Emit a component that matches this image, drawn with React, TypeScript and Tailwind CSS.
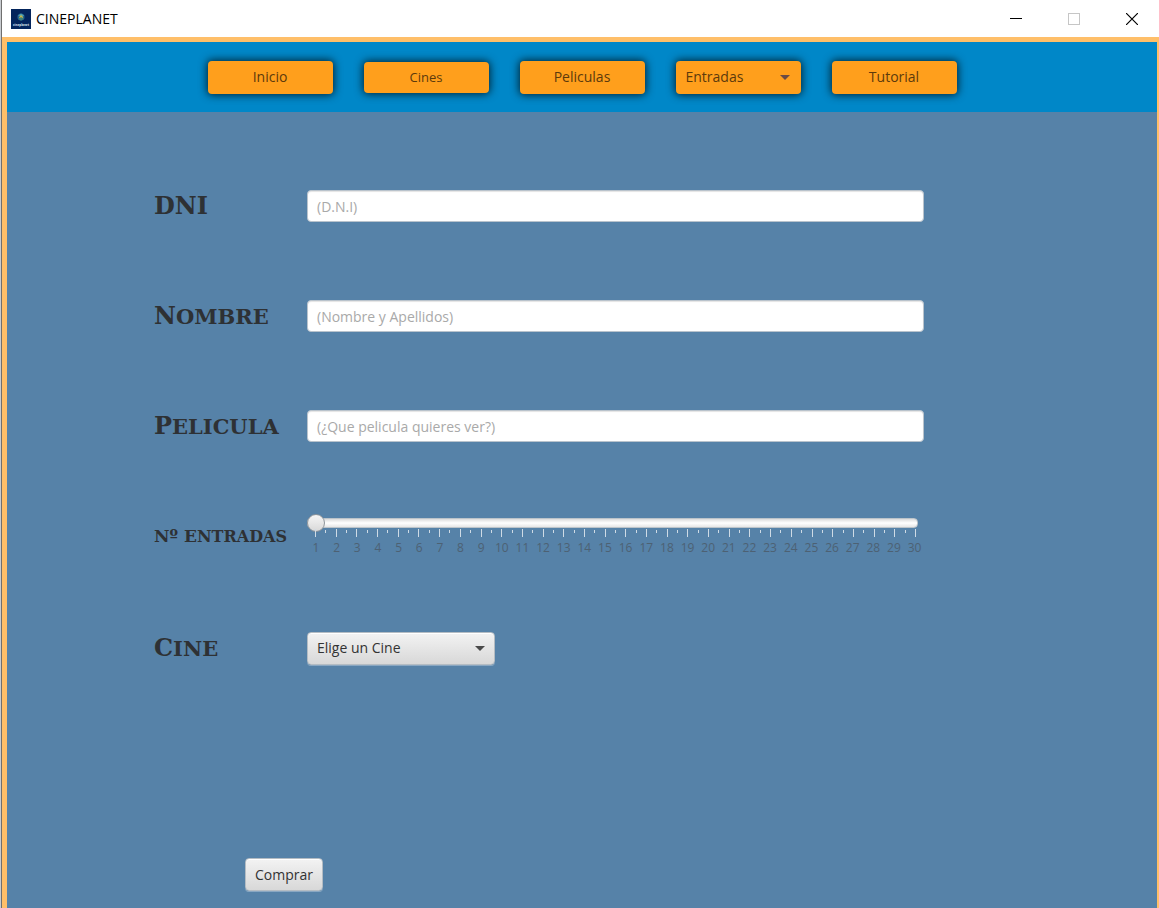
import { useId } from 'react';
import type { ReactNode } from 'react';

const NAV_BUTTON =
  "w-[125px] rounded bg-[#ff9f1c] text-sm text-[#5c3a0c] shadow-[0_0_9px_1px_rgba(0,0,0,0.75)]";

const FIELD_LABEL =
  "w-[153px] shrink-0 whitespace-nowrap font-['DejaVu_Serif',serif] font-bold text-[#2e3134]";

const GREY_CONTROL =
  'rounded border border-[#b4bcc3] bg-linear-to-b from-[#f3f3f3] to-[#d8d8d8] text-sm text-[#333333] shadow-[inset_0_1px_0_#ffffff,0_1px_0_rgba(255,255,255,0.3)]';

const TICKETS = Array.from({ length: 30 }, (_, i) => i + 1);
const TICKS = Array.from({ length: 59 }, (_, i) => i);

function AppLogo() {
  return (
    <svg viewBox="0 0 20 20" className="size-5" aria-hidden="true">
      <rect width="20" height="20" fill="#03245c" />
      <circle cx="10" cy="8" r="3.6" fill="#23638c" />
      <path d="M7 6.5 10 4.4l3 2-1.4 1.3z" fill="#4f9fb0" />
      <path d="M8 8.2 10 6l2.2 2.2L10 10.8z" fill="#c9b84a" />
      <path d="M10 8v3.8L7.4 10zM10 8v3.8l2.8-2z" fill="#3c7f78" />
      <text x="10" y="16.6" textAnchor="middle" fontSize="3" fontWeight="700" fontFamily="Open Sans, sans-serif" fill="#dfe6f0">
        cineplanet
      </text>
    </svg>
  );
}

function Arrow({ className }: { className: string }) {
  return (
    <svg viewBox="0 0 10 5" className={`pointer-events-none absolute h-[5px] w-[10px] ${className}`} aria-hidden="true">
      <path d="M0 0h10L5 5z" fill="currentColor" />
    </svg>
  );
}

function TitleBar() {
  const control = 'flex h-9 w-12 items-center justify-center';
  return (
    <header className="flex h-[37px] items-center bg-white pr-[3px] pl-[9px]">
      <AppLogo />
      <h1 className="ml-[5px] flex-1 text-sm text-black">CINEPLANET</h1>
      <div className="flex gap-[10px]">
        <button type="button" aria-label="Minimizar" className={control}>
          <svg viewBox="0 0 12 12" className="size-3" shapeRendering="crispEdges">
            <path d="M0 5.5h12" stroke="#000" />
          </svg>
        </button>
        <button type="button" aria-label="Maximizar" disabled className={control}>
          <svg viewBox="0 0 12 12" className="size-3" shapeRendering="crispEdges">
            <rect x=".5" y=".5" width="11" height="11" fill="none" stroke="#c6c6c6" />
          </svg>
        </button>
        <button type="button" aria-label="Cerrar" className={control}>
          <svg viewBox="0 0 12 12" className="size-3">
            <path d="M0 0l12 12M12 0 0 12" stroke="#000" strokeWidth="1.2" />
          </svg>
        </button>
      </div>
    </header>
  );
}

function NavBar() {
  return (
    <nav className="flex h-[70px] items-center justify-center gap-[31px] bg-[#0087c8]">
      <button type="button" className={`${NAV_BUTTON} h-[33px]`}>Inicio</button>
      <button type="button" className={`${NAV_BUTTON} h-[31px] text-[13px]`}>Cines</button>
      <button type="button" className={`${NAV_BUTTON} h-[33px]`}>Peliculas</button>
      <div className="relative flex items-center">
        <select aria-label="Entradas" className={`${NAV_BUTTON} h-[33px] appearance-none pl-[10px]`}>
          <option>Entradas</option>
        </select>
        <Arrow className="right-[11px] text-[#6b4b45]" />
      </div>
      <button type="button" className={`${NAV_BUTTON} h-[33px]`}>Tutorial</button>
    </nav>
  );
}

/* Capitals keep the label size; lower-case runs become slightly smaller capitals. */
function EngravedText({ text, small }: { text: string; small?: boolean }) {
  return text
    .split(/([a-z]+)/)
    .filter(Boolean)
    .map((part, i) =>
      /^[a-z]/.test(part) ? (
        <span key={i} className={`uppercase ${small ? 'text-[16px]' : 'text-[21px]'}`}>{part}</span>
      ) : (
        <span key={i}>{part}</span>
      ),
    );
}

function Row({ id, label, small, children }: { id: string; label: string; small?: boolean; children: ReactNode }) {
  return (
    <div className="flex min-h-[44px] items-center">
      <label htmlFor={id} className={`${FIELD_LABEL} ${small ? 'text-[17px]' : 'text-[24px]'}`}>
        <EngravedText text={label} small={small} />
      </label>
      <div className="min-w-0 flex-1">{children}</div>
    </div>
  );
}

function TextRow({ label, placeholder }: { label: string; placeholder: string }) {
  const id = useId();
  return (
    <Row id={id} label={label}>
      <input
        id={id}
        type="text"
        placeholder={placeholder}
        className="block h-8 w-full rounded border border-[#b9c3cc] bg-white px-[9px] text-sm text-[#333333] shadow-[inset_0_1px_1px_#e4e4e4] placeholder:text-[#a9a9a9]"
      />
    </Row>
  );
}

function TicketSlider() {
  const id = useId();
  return (
    <Row id={id} label="Nº Entradas" small>
      <div className="h-[46px]">
        <div className="grid h-[18px] items-center">
          <div className="col-start-1 row-start-1 mr-[6px] h-[10px] rounded border border-[#bcc4ca] bg-linear-to-b from-[#dcdcdc] via-white to-[#e6e6e6]" />
          <input
            id={id}
            type="range"
            min={1}
            max={30}
            defaultValue={1}
            className="col-start-1 row-start-1 m-0 h-[18px] w-full appearance-none bg-transparent [&::-webkit-slider-thumb]:size-[18px] [&::-webkit-slider-thumb]:appearance-none [&::-webkit-slider-thumb]:rounded-full [&::-webkit-slider-thumb]:border [&::-webkit-slider-thumb]:border-[#8e959b] [&::-webkit-slider-thumb]:bg-linear-to-b [&::-webkit-slider-thumb]:from-[#f6f6f6] [&::-webkit-slider-thumb]:to-[#d9d9d9]"
          />
        </div>
        <div className="-mt-[3px] mb-[3px] flex h-2 justify-between px-2" aria-hidden="true">
          {TICKS.map((t) => (
            <span key={t} className={t % 2 === 0 ? 'h-2 w-px bg-[#cfdbe5]' : 'mt-px h-[3px] w-px bg-[#cfdbe5]'} />
          ))}
        </div>
        <div className="flex justify-between px-[9px] text-xs leading-4 text-[#4d6173]" aria-hidden="true">
          {TICKETS.map((n) => (
            <span key={n} className="flex w-0 justify-center">{n}</span>
          ))}
        </div>
      </div>
    </Row>
  );
}

function CinemaRow() {
  const id = useId();
  return (
    <Row id={id} label="Cine">
      <div className="relative flex w-[188px] items-center">
        <select id={id} className={`${GREY_CONTROL} h-[33px] w-full appearance-none pr-7 pl-[9px]`}>
          <option>Elige un Cine</option>
        </select>
        <Arrow className="right-[10px] text-[#4a4a4a]" />
      </div>
    </Row>
  );
}

export default function App() {
  return (
    <div className="flex min-h-screen font-['Open_Sans','Noto_Sans',sans-serif]">
      <div className="w-[2px] shrink-0 border-r border-[#6f6f6f] bg-[#c9ccd0]" />
      <div className="flex min-w-0 flex-1 flex-col">
        <TitleBar />
        <div className="flex flex-1 flex-col border-t-[5px] border-r-2 border-l-[5px] border-[#ffbf69] bg-[#5682a8]">
          <NavBar />
          <form className="flex flex-1 flex-col gap-[66px] pt-[72px] pr-[233px] pb-[17px] pl-[147px]">
            <TextRow label="DNI" placeholder="(D.N.I)" />
            <TextRow label="Nombre" placeholder="(Nombre y Apellidos)" />
            <TextRow label="Pelicula" placeholder="(¿Que pelicula quieres ver?)" />
            <TicketSlider />
            <CinemaRow />
            <button type="button" className={`${GREY_CONTROL} mt-auto ml-[91px] h-[33px] w-[78px]`}>
              Comprar
            </button>
          </form>
        </div>
      </div>
    </div>
  );
}
